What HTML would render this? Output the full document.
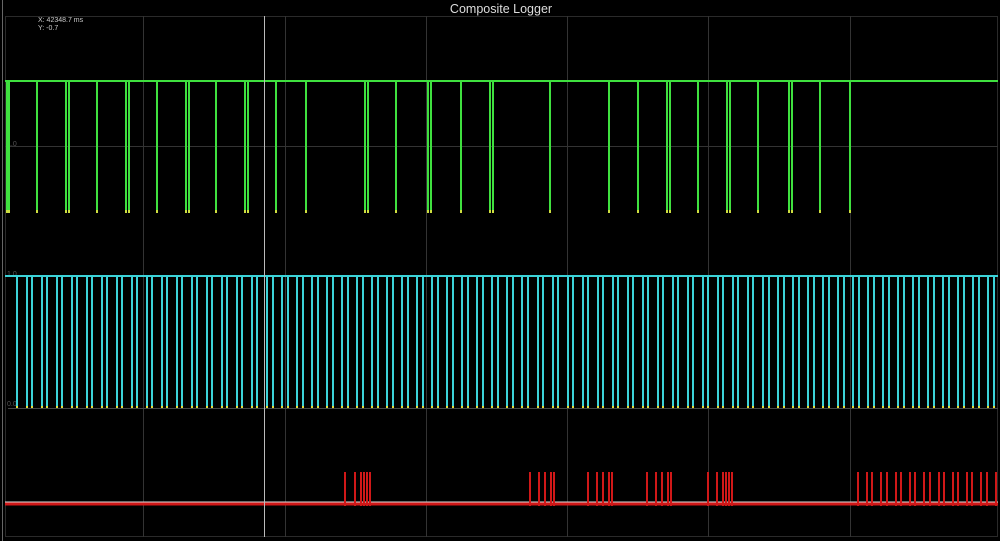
<!DOCTYPE html>
<html><head><style>
html,body{margin:0;padding:0;background:#000;width:1000px;height:541px;overflow:hidden}
svg{display:block}
</style></head><body>
<svg id="s" width="1000" height="541" xmlns="http://www.w3.org/2000/svg" shape-rendering="crispEdges">
<rect width="1000" height="541" fill="#000"/>
<text x="501" y="13" fill="#ddd" font-family="Liberation Sans, sans-serif" font-size="12.5" text-anchor="middle">Composite Logger</text>
<rect x="5.5" y="16.5" width="992" height="520" fill="none" stroke="#2a2a2a"/>
<g stroke="#333" stroke-width="1">
<line x1="143.5" y1="16" x2="143.5" y2="537"/>
<line x1="285.5" y1="16" x2="285.5" y2="537"/>
<line x1="426.5" y1="16" x2="426.5" y2="537"/>
<line x1="567.5" y1="16" x2="567.5" y2="537"/>
<line x1="708.5" y1="16" x2="708.5" y2="537"/>
<line x1="850.5" y1="16" x2="850.5" y2="537"/>
<line x1="5" y1="146.5" x2="998" y2="146.5"/>
</g>
<line x1="2.5" y1="0" x2="2.5" y2="541" stroke="#666"/>
<text x="38" y="22" fill="#ccc" font-family="Liberation Sans, sans-serif" font-size="7">X: 42348.7 ms</text>
<text x="38" y="30" fill="#ccc" font-family="Liberation Sans, sans-serif" font-size="7">Y: -0.7</text>
<text x="7" y="146" fill="#555" font-family="Liberation Sans, sans-serif" font-size="7">1.0</text>
<text x="7" y="276" fill="#555" font-family="Liberation Sans, sans-serif" font-size="7">1.0</text>
<text x="7" y="406" fill="#555" font-family="Liberation Sans, sans-serif" font-size="7">0.0</text>
<g id="g"></g><g id="c"></g><g id="r"></g>
<line x1="264.5" y1="16" x2="264.5" y2="537" stroke="#bbb"/>
</svg>
<script>
var NS="http://www.w3.org/2000/svg";
function L(g,x1,y1,x2,y2,col,w){var l=document.createElementNS(NS,"line");l.setAttribute("x1",x1);l.setAttribute("y1",y1);l.setAttribute("x2",x2);l.setAttribute("y2",y2);l.setAttribute("stroke",col);l.setAttribute("stroke-width",w||2);document.getElementById(g).appendChild(l);}
L("g",5,81,998,81,"#3fe03f",2);
var gx=[7,9,37,66,69,97,126,129,157,186,189,216,245,248,276,306,365,368,396,428,431,461,490,493,550,609,638,667,670,698,727,730,758,789,792,820,850];
gx.forEach(function(x){L("g",x,81,x,212,"#3fe03f",2);L("g",x,210,x,213,"#cde040",2);});
L("c",5,276,998,276,"#3cd2d8",2);
for(var k=0;k<66;k++){[17,26.5].forEach(function(o){var x=Math.round(o+k*15.03);if(x<996){L("c",x,276,x,408,"#3cd2d8",2);L("c",x,406,x,409,"#e0e040",2);}});}
L("c",8,408.5,998,408.5,"#444",1);
L("r",5,504,998,504,"#d01818",3);
L("r",5,502,998,502,"#ddd",1);
var rx=[345,355,361,364,367,370,530,539,545,551,554,588,597,603,609,612,647,656,662,668,671,708,717,723,726,729,732];
for(var k=0;k<10;k++){[858,867].forEach(function(o){var x=Math.round(o+k*14.3);if(x<997)rx.push(x);});}
rx.push(996);
rx.forEach(function(x){L("r",x,472,x,506,"#d01818",2);});
</script>
</body></html>
